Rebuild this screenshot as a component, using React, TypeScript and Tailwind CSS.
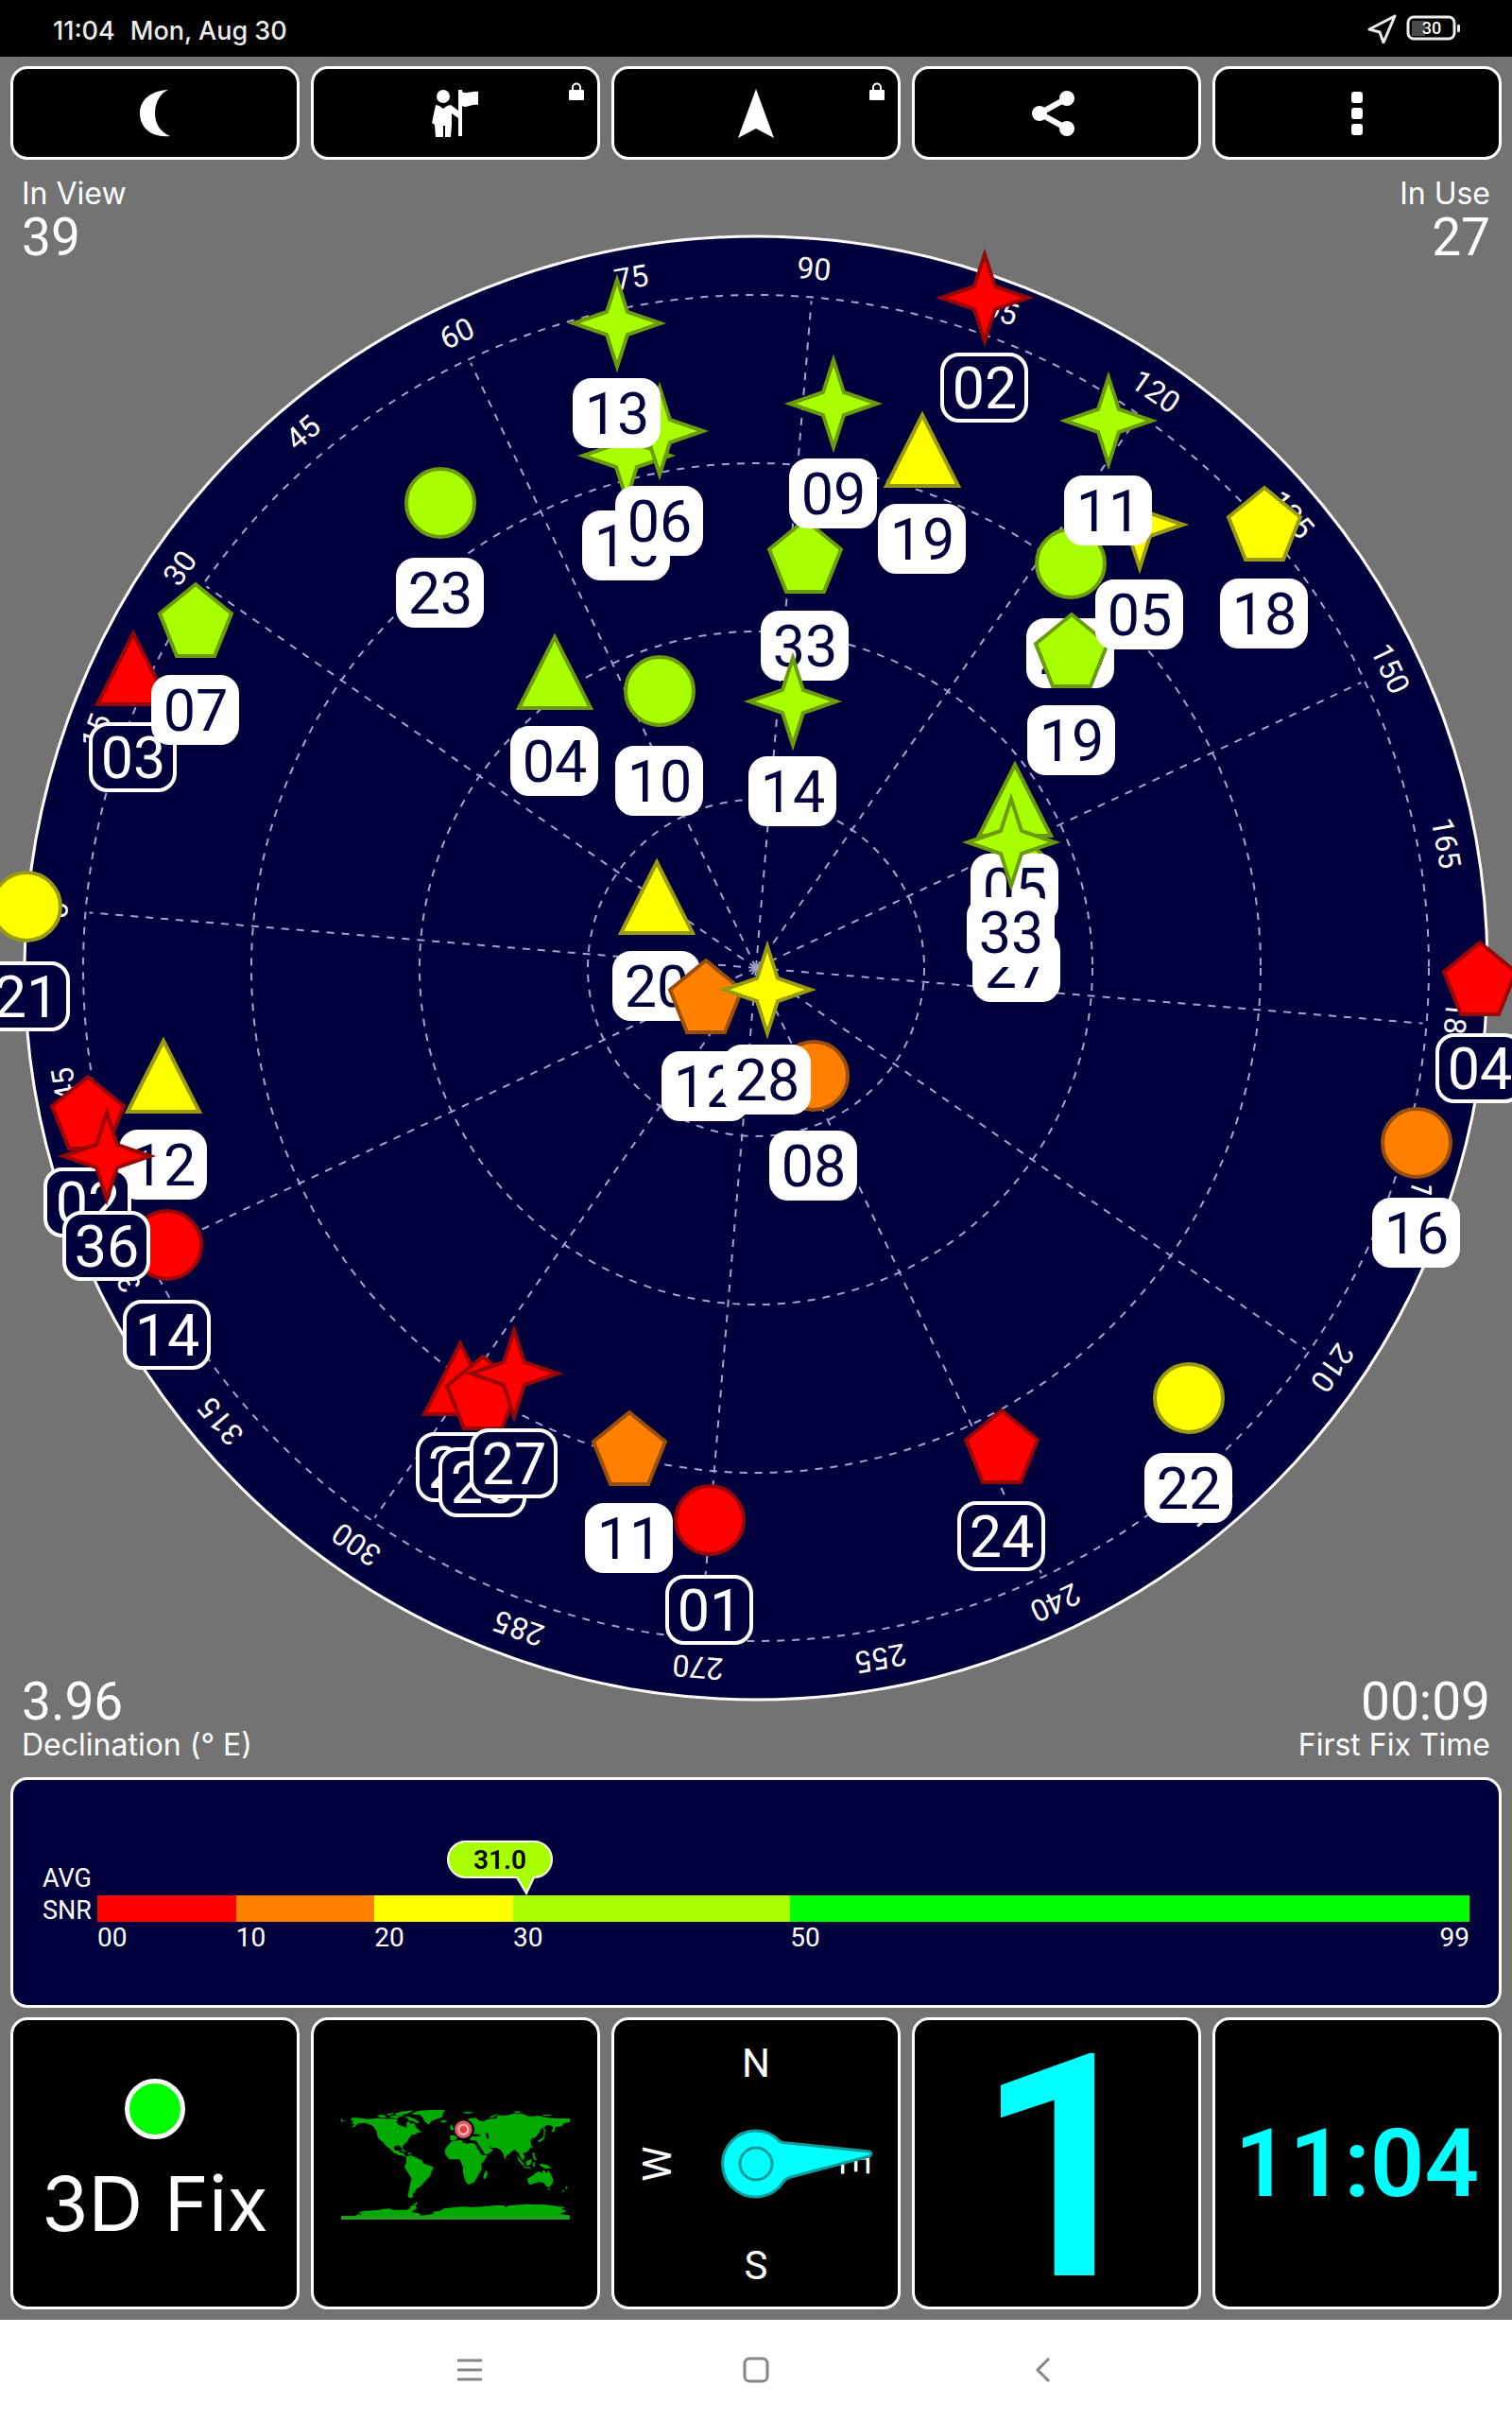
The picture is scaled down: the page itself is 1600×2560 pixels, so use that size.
import type { ReactNode } from 'react';

type Shape = 'circle' | 'triangle' | 'pentagon' | 'star';
type Level = 'good' | 'fair' | 'weak' | 'bad';

interface Satellite {
  id: string;
  shape: Shape;
  level: Level;
  x: number;
  y: number;
  used: boolean;
}

const CENTER = { x: 800, y: 1024 };
const RINGS = [178, 356, 534, 712];
const HEADING_OFFSET = 85.25;

const levelClasses: Record<Level, string> = {
  good: 'fill-[#a8ff00] stroke-[#6b9a0a]',
  fair: 'fill-[#ffff00] stroke-[#999912]',
  weak: 'fill-[#ff8000] stroke-[#994f0c]',
  bad: 'fill-[#ff0000] stroke-[#990606]',
};

// painted in this order, later ones lie on top
const satellites: Satellite[] = [
  { id: '23', shape: 'circle', level: 'good', x: 466, y: 532, used: true },
  { id: '10', shape: 'circle', level: 'good', x: 698, y: 731, used: true },
  { id: '24', shape: 'circle', level: 'good', x: 1133, y: 596, used: true },
  { id: '27', shape: 'circle', level: 'good', x: 1076, y: 928, used: true },
  { id: '21', shape: 'circle', level: 'fair', x: 28, y: 959, used: false },
  { id: '08', shape: 'circle', level: 'weak', x: 861, y: 1138, used: true },
  { id: '14', shape: 'circle', level: 'bad', x: 177, y: 1317, used: false },
  { id: '16', shape: 'circle', level: 'weak', x: 1499, y: 1209, used: true },
  { id: '22', shape: 'circle', level: 'fair', x: 1258, y: 1479, used: true },
  { id: '01', shape: 'circle', level: 'bad', x: 751, y: 1608, used: false },
  { id: '03', shape: 'triangle', level: 'bad', x: 141, y: 706, used: false },
  { id: '04', shape: 'triangle', level: 'good', x: 587, y: 710, used: true },
  { id: '20', shape: 'triangle', level: 'fair', x: 695, y: 948, used: true },
  { id: '12', shape: 'triangle', level: 'fair', x: 173, y: 1137, used: true },
  { id: '19', shape: 'triangle', level: 'fair', x: 976, y: 475, used: true },
  { id: '05', shape: 'triangle', level: 'good', x: 1074, y: 845, used: true },
  { id: '25', shape: 'triangle', level: 'bad', x: 487, y: 1457, used: false },
  { id: '07', shape: 'pentagon', level: 'good', x: 207, y: 656, used: true },
  { id: '33', shape: 'pentagon', level: 'good', x: 852, y: 588, used: true },
  { id: '19', shape: 'pentagon', level: 'good', x: 1134, y: 688, used: true },
  { id: '18', shape: 'pentagon', level: 'fair', x: 1338, y: 554, used: true },
  { id: '04', shape: 'pentagon', level: 'bad', x: 1566, y: 1035, used: false },
  { id: '24', shape: 'pentagon', level: 'bad', x: 1060, y: 1530, used: false },
  { id: '11', shape: 'pentagon', level: 'weak', x: 666, y: 1532, used: true },
  { id: '02', shape: 'pentagon', level: 'bad', x: 93, y: 1177, used: false },
  { id: '12', shape: 'pentagon', level: 'weak', x: 747, y: 1054, used: true },
  { id: '26', shape: 'pentagon', level: 'bad', x: 511, y: 1473, used: false },
  { id: '15', shape: 'star', level: 'good', x: 663, y: 482, used: true },
  { id: '06', shape: 'star', level: 'good', x: 698, y: 456, used: true },
  { id: '13', shape: 'star', level: 'good', x: 653, y: 342, used: true },
  { id: '14', shape: 'star', level: 'good', x: 839, y: 742, used: true },
  { id: '09', shape: 'star', level: 'good', x: 882, y: 427, used: true },
  { id: '02', shape: 'star', level: 'bad', x: 1042, y: 315, used: false },
  { id: '05', shape: 'star', level: 'fair', x: 1206, y: 555, used: true },
  { id: '11', shape: 'star', level: 'good', x: 1173, y: 445, used: true },
  { id: '33', shape: 'star', level: 'good', x: 1070, y: 891, used: true },
  { id: '28', shape: 'star', level: 'fair', x: 812, y: 1047, used: true },
  { id: '36', shape: 'star', level: 'bad', x: 113, y: 1223, used: false },
  { id: '27', shape: 'star', level: 'bad', x: 544, y: 1453, used: false },
];

const shapePoints: Record<Exclude<Shape, 'circle'>, string> = {
  triangle: '0,-36 38,39 -38,39',
  pentagon: '0,-38 38,-7 20,38 -20,38 -38,-7',
  star: '0,-46 11,-12 46,0 11,12 0,46 -11,12 -46,0 -11,-12',
};

const snrSegments = [
  { label: '00', span: 10, color: 'bg-[#ff0000]' },
  { label: '10', span: 10, color: 'bg-[#ff8000]' },
  { label: '20', span: 10, color: 'bg-[#ffff00]' },
  { label: '30', span: 20, color: 'bg-[#a8ff00]' },
  { label: '50', span: 49, color: 'bg-[#00ff00]' },
];
const SNR_MAX = 99;
const SNR_AVG = 31;

function StatusBar() {
  return (
    <header className="flex h-[60px] items-center justify-between bg-black pl-14 pr-[54px] text-[#ececec]">
      <p className="flex gap-4 pt-1 text-[27px] font-medium leading-none">
        <span>11:04</span>
        <span>Mon, Aug 30</span>
      </p>
      <div className="flex items-center gap-[10px]">
        <svg viewBox="0 0 32 32" className="size-8" fill="none" stroke="currentColor" strokeWidth="3" strokeLinejoin="round">
          <path d="M30 3 3 17l11 3 4 11z" />
        </svg>
        <svg viewBox="0 0 58 28" className="h-7 w-[58px]">
          <rect x="6" y="6" width="14" height="16" className="fill-[#4a4a4a]" />
          <rect x="2" y="2" width="49" height="23" rx="6" fill="none" stroke="currentColor" strokeWidth="3" />
          <rect x="54" y="10" width="3" height="8" rx="1" fill="currentColor" />
          <text x="27" y="20" textAnchor="middle" className="fill-white font-[Roboto] text-[18px] font-medium">
            30
          </text>
        </svg>
      </div>
    </header>
  );
}

function LockBadge() {
  return (
    <svg viewBox="0 0 16 20" className="absolute right-[14px] top-[14px] h-5 w-4">
      <path d="M4 9V5.500a4 4 0 0 1 8 0V9" fill="none" stroke="white" strokeWidth="2" />
      <rect x="0" y="8" width="16" height="11" rx="1" fill="white" />
    </svg>
  );
}

function ToolButton({ label, locked, children }: { label: string; locked?: boolean; children: ReactNode }) {
  return (
    <button
      type="button"
      aria-label={label}
      className="relative flex h-[99px] items-center justify-center rounded-[18px] border-[3px] border-white bg-black text-white"
    >
      {children}
      {locked && <LockBadge />}
    </button>
  );
}

function Toolbar() {
  return (
    <nav className="grid grid-cols-5 gap-3 px-[11px] pt-[10px]">
      <ToolButton label="Night mode">
        <svg viewBox="0 0 34 52" className="h-[52px] w-[34px]" fill="currentColor">
          <path d="M31 1C12 2 1 12 1 26S12 52 33 50C23 46 17 37 17 26S22 5 31 1Z" />
        </svg>
      </ToolButton>
      <ToolButton label="Guide" locked>
        <svg viewBox="0 0 50 52" className="h-[52px] w-[50px]" fill="currentColor">
          <circle cx="12" cy="8" r="7" />
          <path d="M4 17l4 1 4 3 4-3 4-1 8 6V1h4v2c5 3 9-1 17 0v14c-8-1-12 4-17 1v32h-4V31l-7-5v12l-1 13h-6V39h-2v12H4l-1-13-3-2z" />
        </svg>
      </ToolButton>
      <ToolButton label="Navigate" locked>
        <svg viewBox="0 0 40 54" className="h-[54px] w-10" fill="currentColor">
          <path d="M20 1 39 53 20 43 1 53z" />
        </svg>
      </ToolButton>
      <ToolButton label="Share">
        <svg viewBox="0 0 54 50" className="h-[50px] w-[54px]" fill="currentColor">
          <path d="M38 9 9 25l29 16" fill="none" stroke="currentColor" strokeWidth="6" />
          <circle cx="38" cy="9" r="8" />
          <circle cx="9" cy="25" r="8" />
          <circle cx="38" cy="41" r="8" />
        </svg>
      </ToolButton>
      <ToolButton label="More">
        <svg viewBox="0 0 12 46" className="h-[46px] w-3" fill="currentColor">
          <rect x="0" y="0" width="12" height="12" rx="3" />
          <rect x="0" y="17" width="12" height="12" rx="3" />
          <rect x="0" y="34" width="12" height="12" rx="3" />
        </svg>
      </ToolButton>
    </nav>
  );
}

function SatelliteMarker({ id, shape, level, x, y, used }: Satellite) {
  return (
    <g transform={`translate(${x} ${y})`}>
      {shape === 'circle' ? (
        <circle r="36" strokeWidth="4" className={levelClasses[level]} />
      ) : (
        <polygon points={shapePoints[shape]} strokeWidth="4" strokeMiterlimit="10" className={levelClasses[level]} />
      )}
      <rect
        x="-45"
        y="60"
        width="89"
        height="70"
        rx="18"
        strokeWidth="4"
        className={used ? 'fill-white stroke-white' : 'fill-[#00003c] stroke-white'}
      />
      <text
        y="117"
        textAnchor="middle"
        className={used ? 'fill-[#00003c] font-[Roboto] text-[61px]' : 'fill-white font-[Roboto] text-[61px]'}
      >
        {id}
      </text>
    </g>
  );
}

function SkyPlot() {
  const bearings = Array.from({ length: 24 }, (_, i) => i * 15);

  return (
    <svg viewBox="0 169 1600 1711" className="block w-full">
      <circle cx={CENTER.x} cy={CENTER.y} r="774" strokeWidth="3" className="fill-[#00003c] stroke-white" />
      {RINGS.map((r) => (
        <circle
          key={r}
          cx={CENTER.x}
          cy={CENTER.y}
          r={r}
          fill="none"
          strokeWidth="2"
          strokeDasharray="8 8"
          className="stroke-[#a3a3cc]"
        />
      ))}
      {bearings.map((deg) => (
        <g key={deg} transform={`translate(${CENTER.x} ${CENTER.y}) rotate(${deg - HEADING_OFFSET})`}>
          {deg % 30 === 0 && (
            <line y2="-708" strokeWidth="2" strokeDasharray="8 8" className="stroke-[#a3a3cc]" />
          )}
          <text y="-731" textAnchor="middle" className="fill-white font-[Roboto] text-[32px]">
            {deg}
          </text>
        </g>
      ))}
      {satellites.map((sat) => (
        <SatelliteMarker key={`${sat.shape}-${sat.id}`} {...sat} />
      ))}
    </svg>
  );
}

function SkySection() {
  return (
    <section className="relative text-white">
      <SkyPlot />
      <div className="absolute left-[23px] top-[16px]">
        <p className="text-[32px] leading-10">In View</p>
        <p className="font-[Roboto] text-[55px] leading-[52px]">39</p>
      </div>
      <div className="absolute right-[23px] top-[16px] text-right">
        <p className="text-[32px] leading-10">In Use</p>
        <p className="font-[Roboto] text-[55px] leading-[52px]">27</p>
      </div>
      <div className="absolute bottom-[14px] left-[23px]">
        <p className="font-[Roboto] text-[55px] leading-[52px]">3.96</p>
        <p className="text-[32px] leading-10">Declination (° E)</p>
      </div>
      <div className="absolute bottom-[14px] right-[23px] text-right">
        <p className="font-[Roboto] text-[55px] leading-[52px]">00:09</p>
        <p className="text-[32px] leading-10">First Fix Time</p>
      </div>
    </section>
  );
}

function SnrPanel() {
  return (
    <section className="mx-[11px] h-[244px] rounded-[18px] border-[3px] border-white bg-[#00003c] pl-[31px] pr-[31px] pt-[87px] text-white">
      <div className="flex">
        <p className="w-[58px] font-[Roboto] text-[27px] leading-[34px]">
          AVG
          <br />
          SNR
        </p>
        <div className="relative mt-[35px] flex-1">
          <div className="flex">
            {snrSegments.map((seg) => (
              <div key={seg.label} style={{ width: `${(seg.span / SNR_MAX) * 100}%` }}>
                <div className={`h-7 ${seg.color}`} />
                <p className="font-[Roboto] text-[28px] leading-[34px]">{seg.label}</p>
              </div>
            ))}
          </div>
          <span className="absolute right-0 top-7 font-[Roboto] text-[28px] leading-[34px]">99</span>
          {/* Average bubble */}
          <div className="absolute bottom-full h-[58px]" style={{ left: `${(SNR_AVG / SNR_MAX) * 100}%` }}>
            <svg viewBox="0 0 112 58" className="h-[58px] w-28 -translate-x-[85px]">
              <path
                d="M20 1H92A19 19 0 0 1 92 39L84 56 74 39H20A19 19 0 0 1 20 1Z"
                strokeWidth="2"
                className="fill-[#a8ff00] stroke-white"
              />
              <text x="56" y="30" textAnchor="middle" className="fill-black font-[Roboto] text-[28px] font-semibold">
                31.0
              </text>
            </svg>
          </div>
        </div>
      </div>
    </section>
  );
}

function WorldMap() {
  return (
    <svg viewBox="63 60 726 360" className="w-[242px]">
      <g className="fill-[#00aa00]">
        <path d="M92 98l10-5 23 2 23 3 30-3 27 2 20 0 18 2-5 9 8 8 16 6 6 4 4-8-2-10 10-2 4 8 10-4 8 16 10 8 6 6-12 0-6 6-12 2-10 12-6 10-8 8-6 6 2 12-6-6-6-8-12 0-6 6 4 10 12 0 4 6 12 2 2 8 10 4 8-2-2 6-10-2-12-6-12-2-18-8-10-12-10-6-12-14-12-10-6-10-2-14-12-18-14-6-14-4-18 2-12 10-10 4 10-12-12-2 8-6z" />
        <path d="M270 218l14-5 16 7 18 8 8 12 20 6 11 6-7 12-4 14-12 12-10 12-12 12-10 6-6 10-6 6 2 10-12 3-6-7 4-16 4-20 4-20-8-14-10-14-4-12 6-10z" />
        <path d="M286 80l24-9 40-2 44 1-8 10-2 12-20 6-14 6-10 12-12-10-6-12-10-10-16 0z" />
        <path d="M63 94l4 8 14 2-14 1-4 3zM176 90l10-6 16 2 6 6-14 2zM208 82l22-4-6 6-14 2zM232 80l24-6 38-4-18 10-20 4 6 6-20-2zM262 92l16-2 20 8 14 10-8 4-14-8-14-2 0-6zM214 90l22-4 16 6-14 4-14-2zM248 194l14 2 12 8-14-4zM276 204l12 2-6 4-8-2z" />
        <path d="M412 170l18-4 16-2 2 8 14 4 12-2 14 2 10 18 10 16 8 4 12-2-8 14-12 14 2 16-8 14-8 14-8 14-18 8-8-6-6-16-4-16 0-18-6-14-4-10-16 0-18 0-12-16-2-14 8-12z" />
        <path d="M524 260l4 10-6 18-8-2 2-14z" />
        <path d="M410 164l-2-14 16 0 4-10 12-10 10-10 6-12 14-12 20-2 10 8 12 4 18-8 26-2 4-10 30 0 22-6 28 2 20 8 30-2 30 6 30 2 39 0 0 12-19 4-6 8-20 4-6 16-6-2 4-16-16-6-20 10-8 14-12 16-12 4-4 8 4 16-8 12-10 8-10 2 6 12-6 12-8-12-4-10-8-8-8-6-12 12-12 8-4 13-8-21-8-12-12-4-16-2-8-6 6 10 8 2-8 10-18 8-8-10-8-14-8-14-6-8-14 0-6-6-6-6-8 8-6-6-10-2-10 6-10 8z" />
        <path d="M408 122l6-8 4 10 6 8-12 2zM378 104l10-3 12 2-8 6-12 0zM446 76l30-1 6 3-20 3zM534 92l16-8 20-2-18 6-12 8zM608 74l20-1 6 5-16 0zM700 84l26-1 4 4-20 1zM686 168l12-8 8-8 0-14 4 0 0 16-8 12-10 6zM704 134l12-2-6 6zM702 116l6 2 2 14-4 0zM618 214l10 8 12 14 6 12-6-2-12-14zM650 232l16-8 2 10-8 12-10-2zM640 248l14 2 12 2-2 3-18-2zM672 236l10-2-6 6 6 8-6-2-4 6zM670 204l8 2-2 10 8 10-4 4-8-10zM692 240l10 0 16 4 14 12-12-2-8 2-14-8zM668 182l4 2-2 6-3-2zM592 222l4 6-4 0z" />
        <path d="M655 286l17-9 12-11 10-2 6 6 6-11 10 12 4-11 8 12 8 16-2 14-10 12-10-2-8-12-16-2-14 4-14 4-6-6zM718 317l8 1-4 6zM776 310l6 6-2 6-4-4zM774 321l-6 8-6-1z" />
        <path d="M63 406l50-1-5-4 22-1-12-5 14-5 38-2 26-4 20-2 10 4 44 0 16-6-8-4 14-4 8-10 8 2-10 8 6 10-12 6-4 6 20 2 10 6-10 2 28-2 20-4-2-6 20-2 16-8 54-6 40 2 70-6 26 0 6 6 10-6 60-4 60 2 40 6 20 2-14 6 18 6-22 8 16 4 27 1v11H63z" />
      </g>
      <g className="fill-black">
        <path d="M480 148l12-3 16 4-12 4-16-1zM522 142l8 2 2 14-4 4-4-8zM496 178l4 2 20 30-4 0z" />
        <circle cx="453" cy="132" r="33" />
      </g>
      <circle cx="451" cy="131" r="28" className="fill-[#dd5a60]" />
      <circle cx="451" cy="131" r="16" strokeWidth="4" className="fill-[#e8787a] stroke-[#ffd9d0]" />
      <circle cx="451" cy="131" r="10" className="fill-[#e03c48]" />
      <rect x="63" y="406" width="726" height="11" className="fill-[#22a022]" />
    </svg>
  );
}

function Compass() {
  return (
    <svg viewBox="0 0 300 303" className="w-full">
      <g textAnchor="middle" className="fill-white font-[Roboto] text-[42px]">
        <text x="150" y="60">N</text>
        <text x="150" y="274">S</text>
        <text transform="translate(60 152) rotate(-90)" y="0">W</text>
        <text transform="translate(240 152) rotate(90)" y="0">E</text>
      </g>
      <path
        d="M175 128A35 35 0 1 0 179 171Q182 167 187 166L270 144Q274 141 270 139L184 130Q178 130 175 128Z"
        strokeWidth="3"
        className="fill-[#00ffff] stroke-[#129a9a]"
      />
      <circle cx="150" cy="152" r="17" fill="none" strokeWidth="3" className="stroke-[#129a9a]" />
    </svg>
  );
}

function Tile({ children }: { children: ReactNode }) {
  return (
    <div className="flex h-[309px] flex-col items-center justify-center overflow-hidden rounded-[18px] border-[3px] border-white bg-black">
      {children}
    </div>
  );
}

function Tiles() {
  return (
    <section className="grid grid-cols-5 gap-3 px-[11px] pb-[11px] pt-[10px]">
      <Tile>
        <span className="size-16 rounded-full border-[5px] border-white bg-[#00ff00]" />
        <p className="mt-5 text-[80px] leading-[96px] text-white">3D Fix</p>
      </Tile>
      <Tile>
        <WorldMap />
      </Tile>
      <Tile>
        <Compass />
      </Tile>
      <Tile>
        <p className="pl-4 pt-3 font-[Roboto] text-[330px] font-semibold leading-none text-[#00ffff]">1</p>
      </Tile>
      <Tile>
        <p className="font-[Roboto] text-[101px] font-semibold leading-none text-[#00ffff]">11:04</p>
      </Tile>
    </section>
  );
}

function SystemNav() {
  return (
    <footer className="bg-white">
      <div className="mx-auto grid h-[106px] max-w-[910px] grid-cols-3 text-[#858585]">
        <button type="button" aria-label="Recent apps" className="flex items-center justify-center">
          <svg viewBox="0 0 28 28" className="size-7" stroke="currentColor" strokeWidth="3">
            <path d="M1 4h26M1 14h26M1 24h26" />
          </svg>
        </button>
        <button type="button" aria-label="Home" className="flex items-center justify-center">
          <svg viewBox="0 0 28 28" className="size-7" fill="none" stroke="currentColor" strokeWidth="3">
            <rect x="2" y="2" width="24" height="24" rx="5" />
          </svg>
        </button>
        <button type="button" aria-label="Back" className="flex items-center justify-center">
          <svg viewBox="0 0 28 28" className="size-7" fill="none" stroke="currentColor" strokeWidth="3">
            <path d="M21 2 9 14l12 12" />
          </svg>
        </button>
      </div>
    </footer>
  );
}

export default function App() {
  return (
    <div className="min-h-screen overflow-hidden bg-[#737373] font-[Inter,sans-serif]">
      <StatusBar />
      <main>
        <Toolbar />
        <SkySection />
        <SnrPanel />
        <Tiles />
      </main>
      <SystemNav />
    </div>
  );
}
